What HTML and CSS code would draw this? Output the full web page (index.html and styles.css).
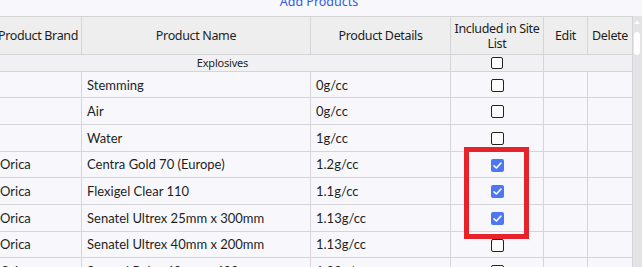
FILE: index.html
```html
<!DOCTYPE html>
<html>
<head>
<meta charset="utf-8">
<link rel="stylesheet" href="styles.css">
</head>
<body>
<div class="page">
  <div class="topbar"><a class="add-link">Add Products</a></div>
  <div class="main">
    <div class="grid-wrap">
      <table class="grid">
        <colgroup>
          <col class="c-brand"><col class="c-name"><col class="c-details"><col class="c-incl"><col class="c-edit"><col class="c-del">
        </colgroup>
        <thead>
          <tr class="head">
            <th>Product Brand</th>
            <th>Product Name</th>
            <th>Product Details</th>
            <th>Included in Site<br>List</th>
            <th>Edit</th>
            <th>Delete</th>
          </tr>
        </thead>
        <tbody>
          <tr class="group">
            <td colspan="3">Explosives</td>
            <td class="cb-cell"><span class="cb"></span></td>
            <td colspan="2"></td>
          </tr>
          <tr class="row"><td></td><td>Stemming</td><td>0g/cc</td><td class="cb-cell"><span class="cb"></span></td><td></td><td></td></tr>
          <tr class="row"><td></td><td>Air</td><td>0g/cc</td><td class="cb-cell"><span class="cb"></span></td><td></td><td></td></tr>
          <tr class="row"><td></td><td>Water</td><td>1g/cc</td><td class="cb-cell"><span class="cb"></span></td><td></td><td></td></tr>
          <tr class="row"><td>Orica</td><td>Centra Gold 70 (Europe)</td><td>1.2g/cc</td><td class="cb-cell"><span class="cb on"><svg viewBox="0 0 13 13"><path d="M3 6.8 L5.4 9 L10 4" fill="none" stroke="#fff" stroke-width="1.6" stroke-linecap="round" stroke-linejoin="round"/></svg></span></td><td></td><td></td></tr>
          <tr class="row"><td>Orica</td><td>Flexigel Clear 110</td><td>1.1g/cc</td><td class="cb-cell"><span class="cb on"><svg viewBox="0 0 13 13"><path d="M3 6.8 L5.4 9 L10 4" fill="none" stroke="#fff" stroke-width="1.6" stroke-linecap="round" stroke-linejoin="round"/></svg></span></td><td></td><td></td></tr>
          <tr class="row"><td>Orica</td><td>Senatel Ultrex 25mm x 300mm</td><td>1.13g/cc</td><td class="cb-cell"><span class="cb on"><svg viewBox="0 0 13 13"><path d="M3 6.8 L5.4 9 L10 4" fill="none" stroke="#fff" stroke-width="1.6" stroke-linecap="round" stroke-linejoin="round"/></svg></span></td><td></td><td></td></tr>
          <tr class="row"><td>Orica</td><td>Senatel Ultrex 40mm x 200mm</td><td>1.13g/cc</td><td class="cb-cell"><span class="cb"></span></td><td></td><td></td></tr>
          <tr class="row"><td>Orica</td><td>Senatel Pulse 40mm x 400mm</td><td>1.09g/cc</td><td class="cb-cell"><span class="cb"></span></td><td></td><td></td></tr>
        </tbody>
      </table>
      <div class="highlight"></div>
    </div>
    <div class="scrollbar">
      <div class="sb-arrow"></div>
      <div class="sb-thumb"></div>
    </div>
  </div>
</div>
</body>
</html>
```

FILE: styles.css
```css
html, body {
  margin: 0;
  padding: 0;
  background: #f8f8fc;
  overflow: hidden;
}
.page {
  width: 642px;
  height: 267px;
  overflow: hidden;
  display: flex;
  flex-direction: column;
}
.topbar {
  height: 16px;
  flex: none;
  overflow: hidden;
  text-align: center;
  padding-right: 4px;
}
.add-link {
  display: block;
  margin-top: -6px;
  font-family: "Noto Sans", sans-serif;
  font-size: 12.5px;
  line-height: 16px;
  color: #2e5be6;
}
.main {
  display: flex;
  margin-left: -6px;
  width: 648px;
  flex: 1;
  min-height: 0;
}
.grid-wrap {
  position: relative;
  width: 638px;
  flex: none;
}
.grid {
  table-layout: fixed;
  border-collapse: collapse;
  width: 638px;
  color: #1e1e1e;
}
.c-brand { width: 87px; }
.c-name { width: 229px; }
.c-details { width: 140px; }
.c-incl { width: 93px; }
.c-edit { width: 44px; }
.c-del { width: 45px; }
.grid th, .grid td {
  border: 1px solid #d5d5d8;
  padding: 0 5px;
  overflow: hidden;
  white-space: nowrap;
}
.head th {
  height: 37px;
  background: #eeeeee;
  font-family: "Noto Sans", sans-serif;
  font-weight: normal;
  font-size: 12.5px;
  letter-spacing: -0.35px;
  line-height: 15px;
  text-align: center;
  padding: 0 1px;
}
.group td {
  height: 15.7px;
  background: #f1f1f3;
  font-family: "Noto Sans", sans-serif;
  font-size: 11px;
  letter-spacing: -0.2px;
  line-height: 14px;
  text-align: center;
  padding: 0;
}
.row td {
  height: 25.67px;
  font-family: Lato, sans-serif;
  font-size: 13px;
  line-height: 16px;
  padding: 0 5px;
}
.grid td.cb-cell {
  text-align: center;
  padding: 0;
}
.cb {
  display: inline-block;
  vertical-align: middle;
  box-sizing: border-box;
  width: 13px;
  height: 13px;
  border: 1px solid #222;
  border-radius: 2px;
  background: #fff;
  margin-top: -2px;
}
.group .cb {
  width: 12px;
  height: 12px;
  margin-top: -1px;
}
.cb.on {
  border: none;
  background: #4c76f4;
}
.cb svg {
  display: block;
  width: 13px;
  height: 13px;
}
.highlight {
  position: absolute;
  left: 470px;
  top: 131px;
  width: 55px;
  height: 82px;
  border: 5px solid #e6222a;
  pointer-events: none;
}
.scrollbar {
  width: 10px;
  flex: none;
  background: #e3e3e5;
  display: flex;
  flex-direction: column;
  align-items: center;
}
.sb-arrow {
  margin-top: 4px;
  width: 0;
  height: 0;
  border-left: 3px solid transparent;
  border-right: 3px solid transparent;
  border-bottom: 4px solid #fafafa;
}
.sb-thumb {
  margin-top: 8px;
  width: 6px;
  height: 23px;
  border-radius: 3px;
  background: #fdfdfd;
}
```
